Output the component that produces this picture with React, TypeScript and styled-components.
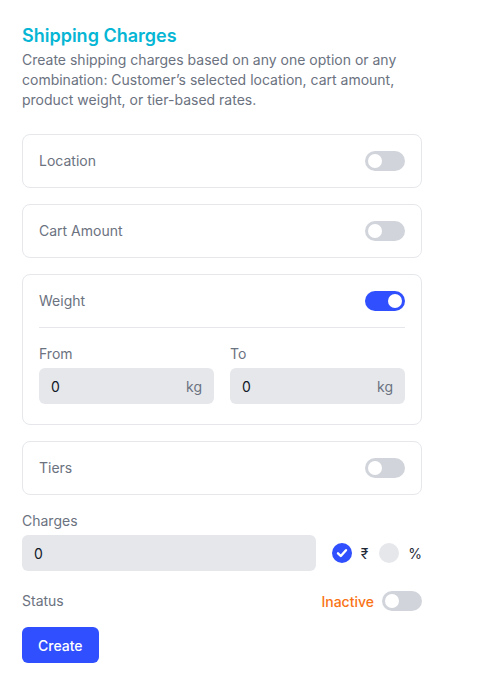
import React, { useState } from "react";
import styled, { createGlobalStyle } from "styled-components";

const Global = createGlobalStyle`
  * { box-sizing: border-box; }
  body { margin: 0; background: #ffffff; font-family: Inter, "Noto Sans", sans-serif; }
`;

const Page = styled.div`
  padding: 22px;
  width: 444px;
`;

const Title = styled.h1`
  margin: 0;
  font-size: 18px;
  line-height: 28px;
  font-weight: 600;
  color: #06b6d4;
`;

const Desc = styled.p`
  margin: 0 0 24px;
  font-size: 14px;
  line-height: 20px;
  color: #6b7280;
`;

const Cards = styled.div`
  display: flex;
  flex-direction: column;
  gap: 16px;
`;

const Card = styled.div`
  border: 1px solid #e5e7eb;
  border-radius: 8px;
  padding: 16px;
`;

const Row = styled.div`
  display: flex;
  align-items: center;
  justify-content: space-between;
  height: 20px;
`;

const Label = styled.span`
  font-size: 14px;
  line-height: 20px;
  color: #6b7280;
`;

const Track = styled.button<{ $on: boolean }>`
  position: relative;
  width: 40px;
  height: 20px;
  border: none;
  padding: 0;
  border-radius: 10px;
  background: ${(p) => (p.$on ? "#304ffe" : "#d1d5db")};
  cursor: pointer;
  flex-shrink: 0;
`;

const Knob = styled.span<{ $on: boolean }>`
  position: absolute;
  top: 3px;
  left: ${(p) => (p.$on ? "23px" : "3px")};
  width: 14px;
  height: 14px;
  border-radius: 50%;
  background: #ffffff;
`;

const Toggle = ({ on, onClick }: { on: boolean; onClick?: () => void }) => (
  <Track $on={on} onClick={onClick}>
    <Knob $on={on} />
  </Track>
);

const Divider = styled.div`
  height: 1px;
  background: #e5e7eb;
  margin: 16px 0;
`;

const RangeGrid = styled.div`
  display: grid;
  grid-template-columns: 1fr 1fr;
  gap: 16px;
  padding-bottom: 4px;
`;

const Field = styled.div`
  display: flex;
  flex-direction: column;
  gap: 4px;
`;

const InputBox = styled.div<{ $w?: string }>`
  display: flex;
  align-items: center;
  justify-content: space-between;
  height: 36px;
  padding: 0 12px;
  background: #e5e7eb;
  border-radius: 6px;
  width: ${(p) => p.$w || "auto"};
`;

const Value = styled.span`
  font-size: 14px;
  color: #111827;
`;

const Unit = styled.span`
  font-size: 14px;
  color: #6b7280;
`;

const Section = styled.div`
  margin-top: 16px;
  display: flex;
  flex-direction: column;
  gap: 4px;
`;

const ChargeRow = styled.div`
  display: flex;
  align-items: center;
`;

const Options = styled.div`
  display: flex;
  align-items: center;
  margin-left: 16px;
`;

const Option = styled.div`
  display: flex;
  align-items: center;
  gap: 9px;
  & + & { margin-left: 11px; }
`;

const Radio = styled.span<{ $on: boolean }>`
  width: 20px;
  height: 20px;
  border-radius: 50%;
  background: ${(p) => (p.$on ? "#304ffe" : "#e5e7eb")};
  display: flex;
  align-items: center;
  justify-content: center;
`;

const Sym = styled.span`
  font-size: 14px;
  color: #1f2937;
`;

const StatusRow = styled.div`
  margin-top: 20px;
  display: flex;
  align-items: center;
  justify-content: space-between;
  height: 20px;
`;

const StatusRight = styled.div`
  display: flex;
  align-items: center;
  gap: 8px;
`;

const Inactive = styled.span`
  font-size: 14px;
  font-weight: 500;
  color: #f97316;
`;

const CreateBtn = styled.button`
  margin-top: 16px;
  height: 36px;
  padding: 0 16px;
  border: none;
  border-radius: 6px;
  background: #304ffe;
  color: #ffffff;
  font-family: Inter, "Noto Sans", sans-serif;
  font-size: 14px;
  font-weight: 500;
  cursor: pointer;
`;

export default function App() {
  const [loc, setLoc] = useState(false);
  const [cart, setCart] = useState(false);
  const [weight, setWeight] = useState(true);
  const [tiers, setTiers] = useState(false);
  const [status, setStatus] = useState(false);

  return (
    <Page>
      <Global />
      <Title>Shipping Charges</Title>
      <Desc>
        Create shipping charges based on any one option or any combination: Customer’s selected
        location, cart amount, product weight, or tier-based rates.
      </Desc>
      <Cards>
        <Card>
          <Row>
            <Label>Location</Label>
            <Toggle on={loc} onClick={() => setLoc(!loc)} />
          </Row>
        </Card>
        <Card>
          <Row>
            <Label>Cart Amount</Label>
            <Toggle on={cart} onClick={() => setCart(!cart)} />
          </Row>
        </Card>
        <Card>
          <Row>
            <Label>Weight</Label>
            <Toggle on={weight} onClick={() => setWeight(!weight)} />
          </Row>
          {weight && (
            <>
              <Divider />
              <RangeGrid>
                <Field>
                  <Label>From</Label>
                  <InputBox>
                    <Value>0</Value>
                    <Unit>kg</Unit>
                  </InputBox>
                </Field>
                <Field>
                  <Label>To</Label>
                  <InputBox>
                    <Value>0</Value>
                    <Unit>kg</Unit>
                  </InputBox>
                </Field>
              </RangeGrid>
            </>
          )}
        </Card>
        <Card>
          <Row>
            <Label>Tiers</Label>
            <Toggle on={tiers} onClick={() => setTiers(!tiers)} />
          </Row>
        </Card>
      </Cards>
      <Section>
        <Label>Charges</Label>
        <ChargeRow>
          <InputBox $w="295px">
            <Value>0</Value>
          </InputBox>
          <Options>
            <Option>
              <Radio $on>
                <svg width="14" height="14" viewBox="0 0 14 14">
                  <path d="M3 7.3 L5.8 10 L11 4.2" fill="none" stroke="#fff" strokeWidth="2.4" strokeLinecap="round" strokeLinejoin="round" />
                </svg>
              </Radio>
              <Sym>₹</Sym>
            </Option>
            <Option>
              <Radio $on={false} />
              <Sym>%</Sym>
            </Option>
          </Options>
        </ChargeRow>
      </Section>
      <StatusRow>
        <Label>Status</Label>
        <StatusRight>
          <Inactive>Inactive</Inactive>
          <Toggle on={status} onClick={() => setStatus(!status)} />
        </StatusRight>
      </StatusRow>
      <CreateBtn>Create</CreateBtn>
    </Page>
  );
}
